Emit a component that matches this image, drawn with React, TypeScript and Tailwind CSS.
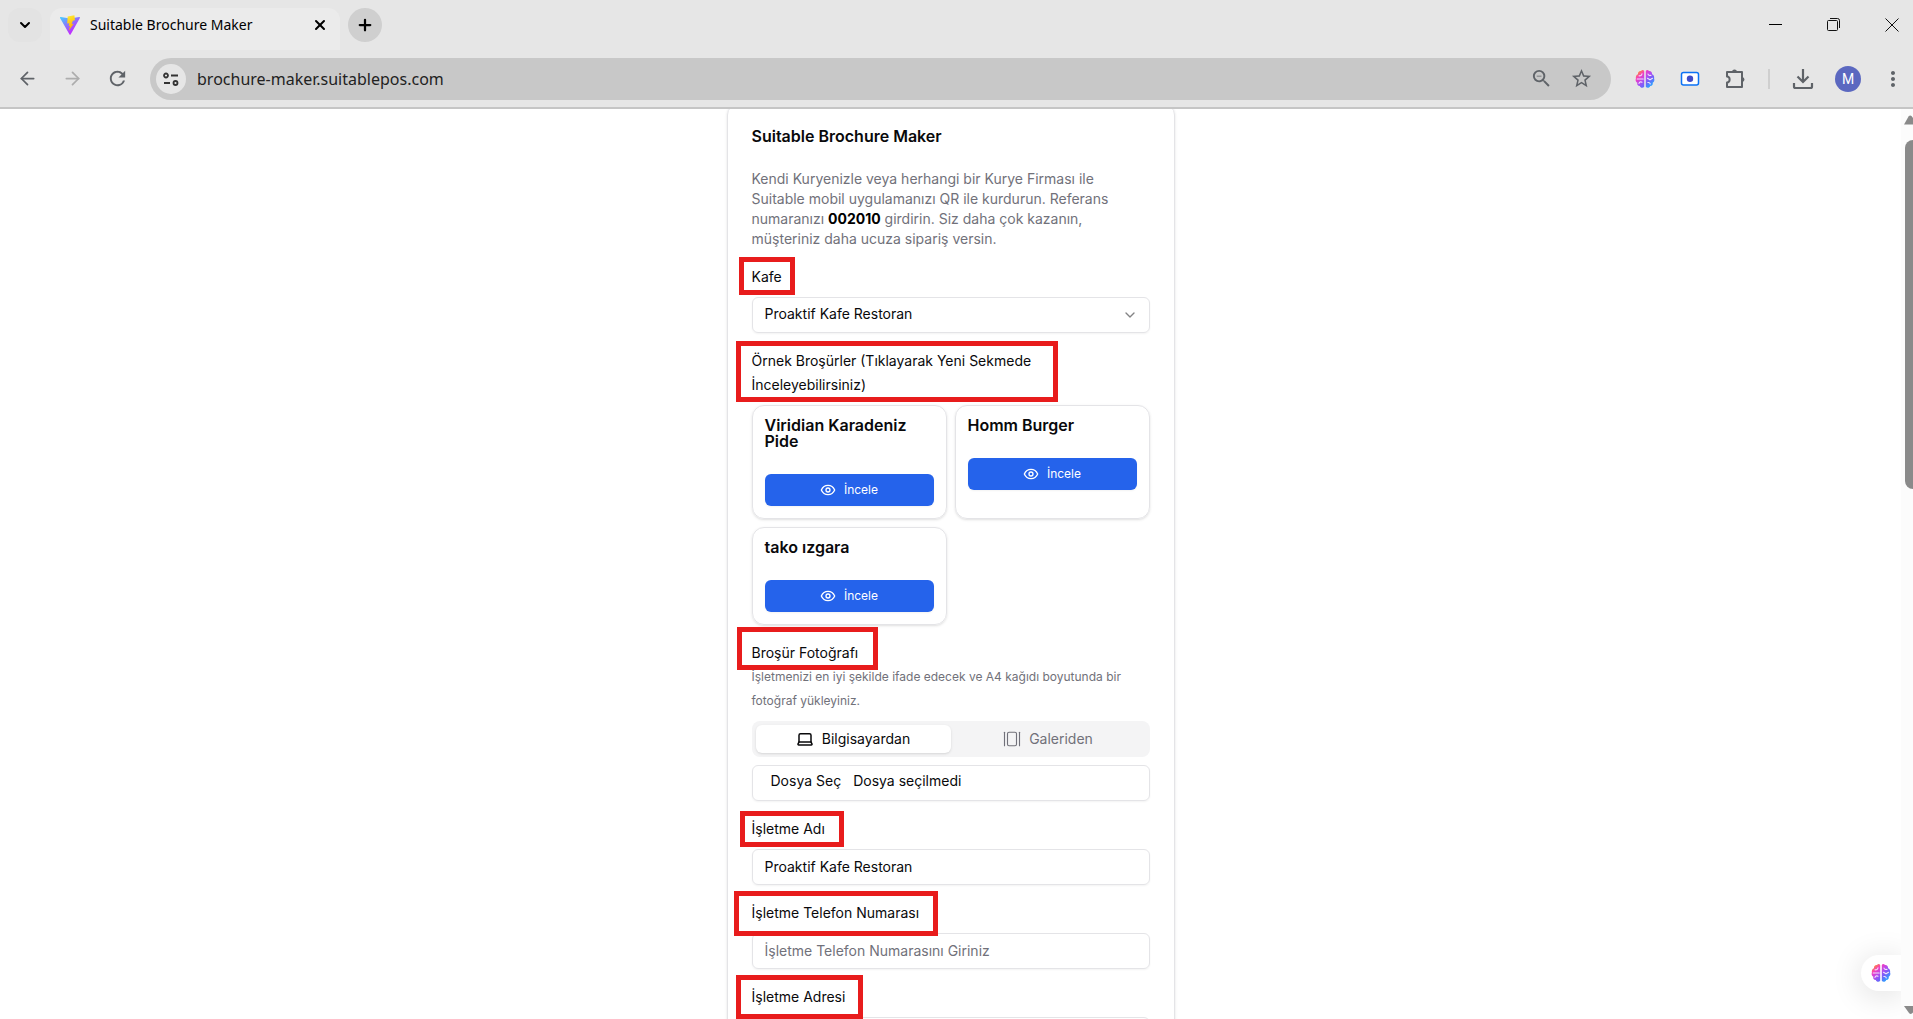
import React, { useId } from "react";
import {
  ArrowLeft,
  ArrowRight,
  ChevronDown,
  GalleryHorizontal,
  Laptop,
  Plus,
  X,
} from "lucide-react";
import { MdRefresh, MdStarBorder, MdZoomOut, MdMoreVert } from "react-icons/md";

function BrainIcon() {
  const id = useId();
  return (
    <svg viewBox="0 0 20 20" className="size-5" aria-hidden="true">
      <defs>
        <linearGradient id={id} x1="0.1" y1="0.05" x2="0.9" y2="0.9">
          <stop offset="0" stopColor="#ff9d1c" />
          <stop offset="0.25" stopColor="#f53cc0" />
          <stop offset="0.5" stopColor="#b04cf0" />
          <stop offset="0.7" stopColor="#6f62fa" />
          <stop offset="1" stopColor="#1fb0ff" />
        </linearGradient>
      </defs>
      <path
        fill={`url(#${id})`}
        d="M9.2 2.200v15.600c-1 1.600-4 1.200-4.400-.8-2 0-3-1.500-2.500-3.200C.8 13.200.2 11 .9 9.500.5 7.500 1.400 5.600 3 5.200 2.700 3.300 4 1.800 6 2c1-1.200 2.700-1.200 3.200.2Zm1.600 0v15.600c1 1.600 4 1.200 4.400-.8 2 0 3-1.500 2.500-3.200 1.500-.6 2.100-2.800 1.400-4.300.4-2-.5-3.900-2.100-4.300.3-1.900-1-3.400-3-3.200-1-1.200-2.700-1.200-3.200.2Z"
      />
      <path
        fill="none"
        stroke="#f0e4fb"
        strokeWidth="1.100"
        strokeLinecap="round"
        d="M4 6.800c1.500.3 2.800-.4 3-2M2.200 10h6M4 14.500c.3-1.400 1.600-2 3-1.300M13 5c.2 1.300 1.400 1.800 3 1.400M12.500 9.300l2.500 1.500 2.500-1.500M12.800 13.500c1.300-.2 2.200.3 2.500 1.500"
      />
    </svg>
  );
}

function TabLogo() {
  return (
    <svg viewBox="0 0 32 32" className="size-5 shrink-0" aria-hidden="true">
      <defs>
        <linearGradient id="logo-base" x1="0" y1="0" x2="0.6" y2="0.8">
          <stop offset="0" stopColor="#41d1ff" />
          <stop offset="1" stopColor="#bd34fe" />
        </linearGradient>
        <linearGradient id="logo-bolt" x1="0.4" y1="0" x2="0.6" y2="1">
          <stop offset="0" stopColor="#ffea30" />
          <stop offset="1" stopColor="#ffa000" />
        </linearGradient>
      </defs>
      <path fill="url(#logo-base)" d="M31.8 4.600 17 31.200a1 1 0 0 1-1.800 0L.1 4.600a1 1 0 0 1 1.100-1.500L16 5.700l14.700-2.600a1 1 0 0 1 1.100 1.500Z" />
      <path fill="url(#logo-bolt)" d="M23 .2 12.300 2.300l-.8 11.400 3.300-.7-1 4.800 2.200-.6-2 8.200L22 14l-3.300.6L20.500 9l3.500-.6Z" />
    </svg>
  );
}

function ChromeHeader() {
  return (
    <header className="shrink-0 border-b-2 border-[#c5c5c5] bg-[#e6e6e6] font-['Noto_Sans',sans-serif]">
      <div className="flex h-[50px] items-center">
        <button aria-label="Sekme ara" className="ml-2 flex size-[34px] items-center justify-center rounded-xl bg-[#e3e3e3]">
          <ChevronDown size={16} strokeWidth={3} />
        </button>
        <div className="ml-2 flex h-full w-[290px] items-end">
          <div className="flex h-[42px] w-full items-center rounded-t-xl bg-[#ebebeb] pr-3 pb-2 pl-[10px]">
            <TabLogo />
            <span className="ml-[10px] flex-1 text-sm whitespace-nowrap">Suitable Brochure Maker</span>
            <button aria-label="Sekmeyi kapat">
              <X size={16} strokeWidth={3} />
            </button>
          </div>
        </div>
        <button aria-label="Yeni sekme" className="ml-2 flex size-[34px] items-center justify-center rounded-full bg-[#cfcfcf]">
          <Plus size={18} strokeWidth={3} />
        </button>
        <div className="ml-auto flex items-center gap-11 pr-[14px]">
          <button aria-label="Simge durumuna küçült">
            <svg viewBox="0 0 14 14" className="size-[14px]"><path d="M0 6.500h13" stroke="#000" /></svg>
          </button>
          <button aria-label="Önceki boyut">
            <svg viewBox="0 0 14 14" className="size-[14px]" fill="none" stroke="#111">
              <rect x="0.5" y="2.5" width="10" height="10" rx="1" />
              <path d="M3 .5h7.500a2 2 0 0 1 2 2V10" />
            </svg>
          </button>
          <button aria-label="Kapat">
            <svg viewBox="0 0 14 14" className="size-[14px]" stroke="#111"><path d="m.5.5 13 13m0-13-13 13" /></svg>
          </button>
        </div>
      </div>
      <div className="flex h-[57px] items-center text-[#5f6368]">
        <button aria-label="Geri" className="ml-[17px]"><ArrowLeft size={21} /></button>
        <button aria-label="İleri" className="ml-6 text-[#adadad]"><ArrowRight size={21} /></button>
        <button aria-label="Yenile" className="ml-[23px]"><MdRefresh size={23} /></button>
        <div className="ml-[21px] flex h-[42px] flex-1 items-center rounded-full bg-[#c8c8c8] px-1.5">
          <button aria-label="Site bilgileri" className="flex size-[30px] items-center justify-center rounded-full bg-[#e6e6e6]">
            <svg viewBox="0 0 16 14" className="h-[14px] w-4" fill="none" stroke="#333" strokeWidth="1.8">
              <circle cx="3" cy="3.5" r="2" />
              <path d="M8 3.500h7M1 11h6" />
              <circle cx="12.5" cy="11" r="2" />
            </svg>
          </button>
          <input
            aria-label="Adres"
            defaultValue="brochure-maker.suitablepos.com"
            className="ml-[11px] min-w-0 flex-1 bg-transparent text-base text-[#222] outline-none"
          />
          <button aria-label="Yakınlaştırma"><MdZoomOut size={23} /></button>
          <button aria-label="Yer işareti" className="mr-[12px] ml-[17px]"><MdStarBorder size={23} /></button>
        </div>
        <div className="flex items-center pl-6">
          <button aria-label="Yapay zekâ eklentisi"><BrainIcon /></button>
          <button aria-label="Ekran kaydı" className="ml-[25px]">
            <svg viewBox="0 0 20 16" className="h-4 w-5">
              <rect x="1.5" y="1.5" width="17" height="12.5" rx="2" fill="#fff" stroke="#0b72f5" strokeWidth="1.5" />
              <circle cx="10" cy="7.7" r="3.2" fill="#3f4bc8" />
            </svg>
          </button>
          <button aria-label="Uzantılar" className="ml-6">
            <svg viewBox="0 0 22 22" className="size-[22px]">
              <path fill="none" stroke="#5f6368" strokeWidth="2" strokeLinejoin="round" d="M3 4h15v15H3v-4.500c3.500-.3 3.500-5.700 0-6Z" />
              <path fill="#5f6368" d="M8 4a2.500 2.500 0 0 1 5 0ZM18 9a2.500 2.500 0 0 1 0 5Z" />
            </svg>
          </button>
          <span className="ml-[22px] h-5 w-0.5 bg-[#cfcfcf]" />
          <button aria-label="İndirilenler" className="ml-[22px]">
            <svg viewBox="0 0 22 22" className="size-[22px]" fill="none" stroke="#5f6368" strokeWidth="2.2">
              <path d="M11 1v13M5.500 8.500 11 14l5.500-5.500M2 15v3.500a1.500 1.500 0 0 0 1.500 1.500h15a1.500 1.500 0 0 0 1.500-1.500V15" />
            </svg>
          </button>
          <button aria-label="Profil" className="ml-[21px] flex size-[26px] items-center justify-center rounded-full bg-[#5b68c0] font-[Roboto,sans-serif] text-sm text-white">M</button>
          <button aria-label="Menü" className="mr-2 ml-5"><MdMoreVert size={24} /></button>
        </div>
      </div>
    </header>
  );
}

function Mark({ className }: { className: string }) {
  return <span aria-hidden="true" className={`pointer-events-none absolute z-10 border-5 border-[#e81c1c] ${className}`} />;
}

const field = "h-9 w-full rounded-md border border-[#e4e4e7] bg-transparent px-3 pb-0.5 text-sm shadow-xs outline-none placeholder:text-[#71717a]";

function BrochureCard({ title }: { title: string }) {
  return (
    <article className="rounded-xl border border-[#e4e4e7] px-3 pt-[11px] pb-3 shadow-sm">
      <h3 className="mb-[25px] text-base leading-none font-semibold">{title}</h3>
      <button type="button" className="flex h-8 w-full items-center justify-center gap-2 rounded-md bg-[#2563eb] text-xs text-white shadow-xs">
        <svg viewBox="0 0 24 24" className="size-4" fill="none" stroke="currentColor" strokeWidth="2" strokeLinejoin="round" aria-hidden="true">
          <path d="M2 12s3-7 10-7 10 7 10 7-3 7-10 7-10-7-10-7Z" />
          <circle cx="12" cy="12" r="3" />
        </svg>
        İncele
      </button>
    </article>
  );
}

function BrochureForm() {
  return (
    <form className="mx-auto -mt-1.5 w-full max-w-md space-y-4 rounded-xl border border-[#e4e4e7] p-6 text-[#09090b] shadow-sm">
      <h1 className="mb-[25px] text-base leading-none font-semibold">Suitable Brochure Maker</h1>
      <p className="text-sm leading-5 text-[#71717a]">
        Kendi Kuryenizle veya herhangi bir Kurye Firması ile<br />
        Suitable mobil uygulamanızı QR ile kurdurun. Referans<br />
        numaranızı <strong className="font-bold text-black">002010</strong> girdirin. Siz daha çok kazanın,<br />
        müşteriniz daha ucuza sipariş versin.
      </p>

      <div className="space-y-2">
        <div className="relative text-sm leading-6">
          <label htmlFor="kafe">Kafe</label>
          <Mark className="-top-2 -left-[13px] h-[38px] w-14" />
        </div>
        <div className="relative">
          <select id="kafe" className={`${field} appearance-none`}>
            <option>Proaktif Kafe Restoran</option>
          </select>
          <ChevronDown size={16} className="pointer-events-none absolute top-[10px] right-3 opacity-50" />
        </div>
      </div>

      <section className="space-y-2">
        <h2 className="relative text-sm leading-6">
          Örnek Broşürler (Tıklayarak Yeni Sekmede<br />İnceleyebilirsiniz)
          <Mark className="-top-2 -left-4 h-[61px] w-[322px]" />
        </h2>
        <div className="grid grid-cols-2 gap-2">
          <BrochureCard title="Viridian Karadeniz Pide" />
          <BrochureCard title="Homm Burger" />
          <BrochureCard title="tako ızgara" />
        </div>
      </section>

      <section className="space-y-2">
        <div className="relative">
          <label htmlFor="foto" className="block text-sm leading-6">Broşür Fotoğrafı</label>
          <p className="text-xs leading-6 text-[#71717a]">
            İşletmenizi en iyi şekilde ifade edecek ve A4 kağıdı boyutunda bir<br />fotoğraf yükleyiniz.
          </p>
          <Mark className="-top-[14px] -left-[15px] h-[43px] w-[141px]" />
        </div>
        <div role="tablist" className="grid h-9 grid-cols-2 rounded-lg bg-[#f4f4f5] p-1 text-sm text-[#71717a]">
          <button type="button" role="tab" aria-selected="true" className="flex items-center justify-center gap-2 rounded-md bg-white text-[#09090b] shadow-sm">
            <Laptop size={18} />
            Bilgisayardan
          </button>
          <button type="button" role="tab" aria-selected="false" className="flex items-center justify-center gap-2">
            <GalleryHorizontal size={18} strokeWidth={1.5} />
            Galeriden
          </button>
        </div>
        <div className="relative flex h-9 items-start gap-3 rounded-md border border-[#e4e4e7] px-[18px] pt-[3px] text-sm leading-6 shadow-xs">
          <span>Dosya Seç</span>
          <span>Dosya seçilmedi</span>
          <input id="foto" type="file" className="absolute inset-0 opacity-0" />
        </div>
      </section>

      <div className="space-y-2">
        <div className="relative text-sm leading-6">
          <label htmlFor="ad">İşletme Adı</label>
          <Mark className="-top-1.5 -left-3 h-9 w-[104px]" />
        </div>
        <input id="ad" defaultValue="Proaktif Kafe Restoran" className={field} />
      </div>
      <div className="space-y-2">
        <div className="relative text-sm leading-6">
          <label htmlFor="tel">İşletme Telefon Numarası</label>
          <Mark className="-top-[10px] -left-[18px] h-[45px] w-[204px]" />
        </div>
        <input id="tel" placeholder="İşletme Telefon Numarasını Giriniz" className={field} />
      </div>
      <div className="space-y-2">
        <div className="relative text-sm leading-6">
          <label htmlFor="adres">İşletme Adresi</label>
          <Mark className="-top-[10px] -left-4 h-11 w-[127px]" />
        </div>
        <input id="adres" className={field} />
      </div>
    </form>
  );
}

export default function App() {
  return (
    <div className="flex h-screen flex-col overflow-hidden bg-white text-black">
      <ChromeHeader />
      <div className="flex min-h-0 flex-1">
        <main className="relative min-w-0 flex-1 overflow-hidden font-[Inter,sans-serif]">
          <BrochureForm />
          <button aria-label="Yapay zekâ yardımcısı" className="absolute right-0 bottom-7 flex h-9 w-10 items-center rounded-l-full bg-white pl-[10px] shadow-[0_4px_32px_rgba(0,0,0,0.14)]">
            <BrainIcon />
          </button>
        </main>
        <div className="flex w-3 shrink-0 flex-col items-end overflow-hidden bg-[#fcfcfc]">
          <svg viewBox="0 0 9 10" className="mt-1.5 h-[10px] w-[9px] shrink-0" aria-hidden="true"><path fill="#8a8a8a" d="M0 9.500 4.500 1.500Q6 0 7.500 1L9 3v6.500Z" /></svg>
          <div className="mt-[15px] h-[349px] w-2 shrink-0 rounded-l-lg bg-[#8a8a8a]" />
          <svg viewBox="0 0 9 10" className="mt-auto mb-1 h-[10px] w-[9px] shrink-0" aria-hidden="true"><path fill="#8a8a8a" d="M0 1h9v6.500Q7 10 5 8Z" /></svg>
        </div>
      </div>
    </div>
  );
}
